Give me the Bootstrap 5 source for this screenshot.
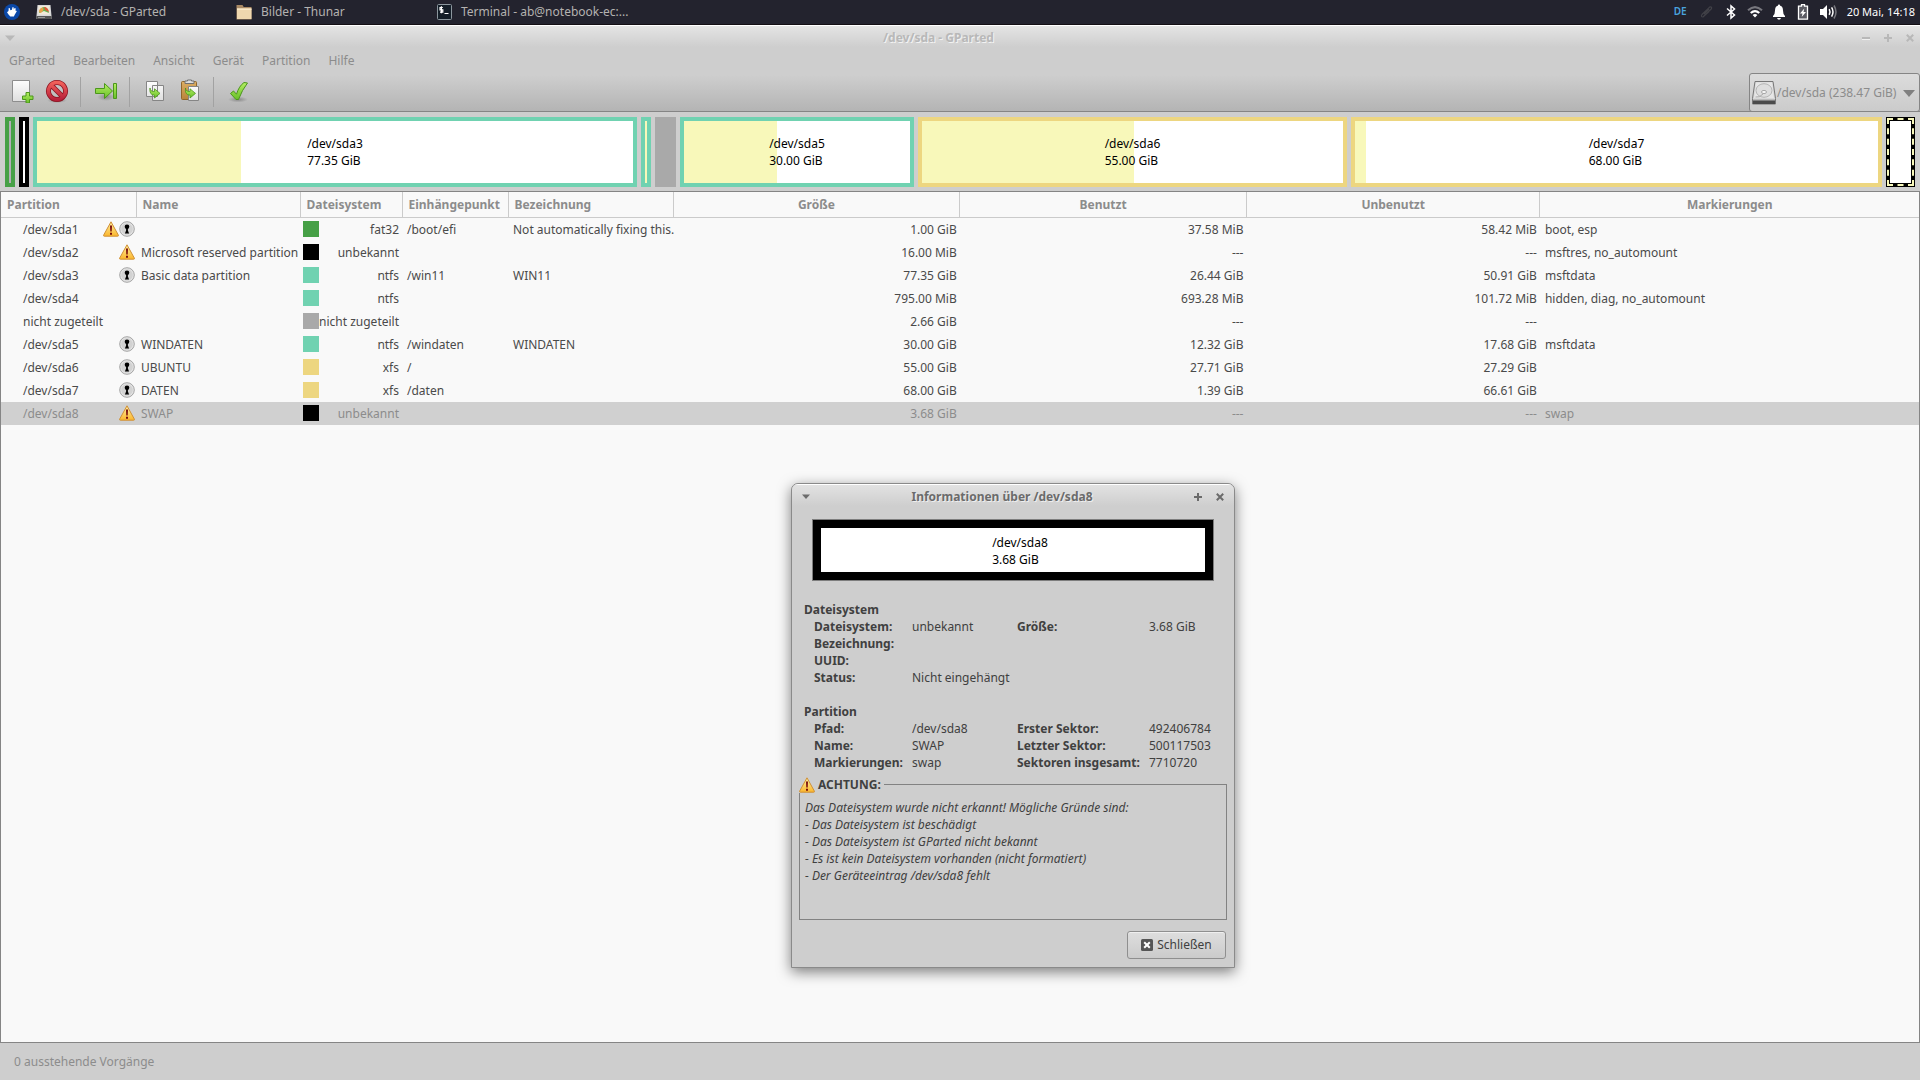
<!DOCTYPE html>
<html lang="de">
<head>
<meta charset="utf-8">
<meta name="viewport" content="width=device-width, initial-scale=1">
<title>/dev/sda - GParted</title>
<link href="https://cdn.jsdelivr.net/npm/bootstrap@5.3.0/dist/css/bootstrap.min.css" rel="stylesheet">
<style>
  body { font: 12px/17px "Noto Sans", sans-serif; color: #4a4a4a; background: #cecece; overflow: hidden; }
  svg { display: block; flex: none; }
  button, select { font: inherit; color: inherit; }

  /* desktop panel */
  .desk-panel { height: 25px; background: #23232e; border-bottom: 1px solid #140f14; color: #b4b2b0; padding: 0 5px 1px 4px; gap: 16px; }
  .task-list { gap: 0; }
  .task-btn { width: 200px; gap: 9px; background: none; border: 0; padding: 0; text-align: left; }
  .tray { color: #fff; gap: 8px; }
  .tray-lang { color: #4aa3df; font-size: 10px; font-weight: 600; margin-right: 4px; }
  .tray-clock { font-size: 11px; margin-left: 2px; }

  /* main window */
  .win-head { background: linear-gradient(#fff 0, #fff 1px, #e4e4e4 1px, #cecece 22px, #cecece 50px, #b4b4b4 86px); border-bottom: 1px solid #858585; color: #8c8c8c; }
  .title-line { height: 23px; font-weight: 700; color: #b8b8b8; text-shadow: 1px 1px 0 #f2f2f2; padding: 2px 6px 0 5px; }
  .title-line button, .dlg-title button { background: none; border: 0; padding: 0; }
  .title-btns { gap: 14px; }
  .menu-line { height: 24px; }
  .menu-line a { color: inherit; text-decoration: none; padding: 0 9px; }
  .tool-line { height: 39px; }
  .tool-line .tool { background: none; border: 0; padding: 0 5px; }
  .tool-group { padding: 0 6px 0 8px; height: 32px; gap: 1px; align-items: start; }
  .tool-group:first-child { padding-left: 5px; }
  .tool-sep { width: 1px; height: 30px; background: #a2a2a2; margin-top: 5px; }
  .dev-combo { width: 171px; height: 39px; margin-bottom: -1px; border: 1px solid #858585; border-radius: 3px; background: linear-gradient(#dcdcdc, #cbcbcb); padding: 0 4px 0 2px; }
  .dev-combo select { appearance: none; border: 0; background: none; padding: 0 0 0 1px; outline: 0; opacity: 1; }

  /* disk map */
  .disk-map { height: 80px; padding: 5px; gap: 4px; border-bottom: 1px solid #858585; }
  .seg { height: 70px; border: 4px solid; background: #fff; color: #000; flex: 1 1 0; position: relative; }
  .seg-tiny { flex: 0 0 10px; }
  .seg .used-part { position: absolute; inset: 0 auto 0 0; background: #f8f8ba; }
  .seg .seg-text { position: relative; }
  .swatch { width: 16px; height: 16px; border: 8px solid; }
  .fs-fat { border-color: #46a046; background: #b3b0b6; }
  .fs-none { border-color: #000; }
  .fs-ntfs { border-color: #70d2b1; }
  .fs-free { border-color: #a9a9a9; background: #a9a9a9; }
  .fs-xfs { border-color: #edd680; }
  .seg.picked::after { content: ""; position: absolute; inset: -3px; border: 2px dashed #f8f8ba; }

  /* partition list */
  .list-pane { background: #f9f9f9; border: 1px solid #858585; border-top: 0; }
  .part-table { table-layout: fixed; width: 100%; --bs-table-bg: transparent; color: inherit; white-space: nowrap; }
  .part-table > thead > tr > th { height: 25px; padding: 0 6px; border: 0 solid #cbcbcb; border-width: 0 1px 1px 0; color: #8c8c8c; vertical-align: middle; background: none; }
  .part-table > thead > tr > th:last-child { border-right: 0; }
  .part-table > tbody > tr > td { height: 23px; padding: 3px 3px 3px 5px; border: 0; color: #4a4a4a; background: none; vertical-align: middle; line-height: 17px; }
  .part-table > tbody > tr > td:first-child { padding: 3px 1px 3px 22px; }
  .part-table > tbody > tr > td:nth-child(3) { padding: 3px; }
  .part-table > tbody > tr.chosen > td { background: #d0d0d0; color: #8c8c8c; }
  .c1 { width: 135px } .c2 { width: 164px } .c3 { width: 102px } .c4 { width: 106px } .c5 { width: 165px }
  .c6 { width: 14.95% } .c8 { width: 15.3% }
  .status-line { height: 37px; padding: 0 14px 1px; color: #8c8c8c; }

  /* info dialog: a window floating over the main one */
  .dlg { position: absolute; left: 791px; top: 483px; width: 444px; background: #cecece; border: 1px solid #8a8a8a; border-radius: 7px 7px 0 0; box-shadow: 0 4px 14px rgba(0,0,0,.5); color: #404040; padding-bottom: 8px; }
  .dlg-title { height: 25px; padding: 0 10px; border-radius: 6px 6px 0 0; background: linear-gradient(#fff 0, #fff 1px, #e2e2e2 1px, #cecece 22px); font-weight: 700; color: #6b6b6b; text-shadow: 1px 1px 0 #eee; }
  .dlg-title .dlg-x { margin-left: 14px; }
  .dlg-bar { margin: 10px 20px 20px; height: 62px; border: 1px solid #7d7d7d; }
  .dlg-bar > div { border: 8px solid #000; background: #fff; color: #000; padding: 2px 0 0 14px; }
  .info-grid { display: grid; grid-template-columns: 98px 105px 132px 1fr; padding-left: 22px; margin: 0; }
  .info-grid dt, .info-grid dd { margin: 0; height: 17px; }
  .info-head { font-size: 12px; line-height: 17px; font-weight: 700; margin: 0; padding-left: 12px; }
  .info-grid + .info-head { margin-top: 17px; }
  .warn-box { margin: 5px 7px 11px; border: 1px solid #828282; min-height: 144px; padding: 6px 5px 5px; font-style: italic; }
  .warn-box legend { float: none; width: auto; font: 700 12px/17px "Noto Sans", sans-serif; background: #cecece; margin: 0 0 0 -6px; padding: 0 3px 0 0; gap: 3px; }
  .close-btn { width: 99px; height: 28px; margin-right: 8px; border: 1px solid #8f8f8f; border-radius: 3px; background: linear-gradient(#dedede, #cbcbcb); box-shadow: inset 0 1px 0 #efefef; color: #404040; gap: 4px; padding: 0 0 1px; }
</style>
<script src="https://cdn.jsdelivr.net/npm/bootstrap@5.3.0/dist/js/bootstrap.bundle.min.js"></script>
</head>
<body class="vh-100 d-flex flex-column">

<svg width="0" height="0" class="position-absolute" aria-hidden="true">
  <defs>
    <linearGradient id="gWarn" x2="0" y2="1"><stop stop-color="#fff0a0"/><stop offset="1" stop-color="#fbb62c"/></linearGradient>
    <linearGradient id="gGreen" x2="0" y2="1"><stop stop-color="#b4ee62"/><stop offset="1" stop-color="#68c028"/></linearGradient>
    <linearGradient id="gRed" x2="0" y2="1"><stop stop-color="#f0605a"/><stop offset="1" stop-color="#b8203a"/></linearGradient>
    <linearGradient id="gPaper" x2="0" y2="1"><stop stop-color="#fdfdfd"/><stop offset="1" stop-color="#dedede"/></linearGradient>
    <linearGradient id="gWood" x2="0" y2="1"><stop stop-color="#dcae64"/><stop offset="1" stop-color="#b98339"/></linearGradient>
    <radialGradient id="gShade"><stop stop-opacity=".28"/><stop offset="1" stop-opacity="0"/></radialGradient>
    <symbol id="warn" viewBox="0 0 16 16"><path d="M8 .8 15.400 14.200q.3 1-.7 1H1.300q-1 0-.7-1z" fill="url(#gWarn)" stroke="#cf8f35" stroke-linejoin="round"/><path d="M7 4.500h2l-.3 6H7.300zM7 11.700h2v2H7z" fill="#7a0c0c"/></symbol>
    <symbol id="key" viewBox="0 0 16 16"><circle cx="8" cy="8" r="7.300" fill="#e4e4e4" stroke="#a5a5a5"/><circle cx="8" cy="8" r="5.800" fill="#d2d2d2"/><circle cx="8" cy="5.700" r="2.300"/><path d="M7.100 7h1.800v2.600l1.200 2.800H5.900l1.200-2.800z"/></symbol>
    <symbol id="tri" viewBox="0 0 10 6"><path d="M0 .5h10L5 6z" fill="currentColor"/></symbol>
    <symbol id="plus" viewBox="0 0 8 8"><path d="M3 0h2v3h3v2H5v3H3V5H0V3h3z" fill="currentColor"/></symbol>
    <symbol id="cross" viewBox="0 0 8 8"><path d="m.8.8 6.400 6.400M7.200.8.8 7.200" stroke="currentColor" stroke-width="2"/></symbol>
  </defs>
</svg>

<header class="desk-panel d-flex align-items-center flex-shrink-0">
  <button class="bg-transparent border-0 p-0" aria-label="Anwendungen">
    <svg width="16" height="16" viewBox="0 0 16 16"><circle cx="8" cy="8" r="8" fill="#0a48a8"/><path d="M3 8.300 4.500 7 4.700 4l1.200.2.4 2L8 5.800l.4-2.600 1.200.1.2 2.200.8-1.600 1.200.5-.4 2.200 1.500.4-1 1.800-1.200 2-.8 1.700H6.300l-1.800-2z" fill="#fff"/></svg>
  </button>
  <div class="task-list d-flex">
    <button class="task-btn d-flex align-items-center">
      <svg width="16" height="16" viewBox="0 0 16 16"><path d="M1.500 1h13l1 11v3H.5v-3z" fill="#d9d9d9"/><path d="M2.500 2h11v8.500h-11z" fill="#f2ead8"/><path d="M3 9q1-6 5-6 4 .3 5 6l-5-2z" fill="#5fb651"/><path d="M8 3q4 0 5 5L9 6z" fill="#e05a3a"/><path d="M3 8q0-4 4-4.500L7.500 6 5 9z" fill="#e9a04a"/><path d="M.5 12h15v3H.5z" fill="#555"/><path d="M2 13h7v1H2z" fill="#999"/></svg>
      <span>/dev/sda - GParted</span></button>
    <button class="task-btn d-flex align-items-center">
      <svg width="16" height="16" viewBox="0 0 16 16"><path d="M.5 1h6l1.200 2H15.500v12.500H.5z" fill="#a98964"/><path d="M1 4.500h14.500v10.500H1z" fill="#efd7ae"/><path d="M1 4.500h14.500v1.200H1z" fill="#fff0d0"/></svg>
      <span>Bilder - Thunar</span></button>
    <button class="task-btn d-flex align-items-center">
      <svg width="16" height="16" viewBox="0 0 16 16"><rect x="1.500" y=".5" width="14" height="15" rx="1" fill="#141e28" stroke="#8c979e"/><path d="M6.800 3.500H4v2.300h2.800v2.300H4M5.400 2.300v7M8.500 9.500h4" fill="none" stroke="#fff" stroke-width="1.200"/></svg>
      <span>Terminal - ab@notebook-ec:...</span></button>
  </div>
  <div class="tray ms-auto d-flex align-items-center">
    <span class="tray-lang">DE</span>
    <svg width="16" height="16" viewBox="0 0 16 16" fill="none" stroke="#414147" stroke-width="1.200"><path d="m4 13 8.500-8.300q.6-2-1.500-1.800L3 10.500q-1.500 2.500 1 2.500l6-5.500M5 10l5-5"/></svg>
    <svg width="16" height="16" viewBox="-1 0 16 16" fill="none" stroke="#fff" stroke-width="1.500"><path d="m3 4.500 7.500 6.500L7 14V2l3.500 3L3 11.500"/></svg>
    <svg width="16" height="16" viewBox="0 0 16 16"><path d="M.3 5.500Q8-1.500 15.700 5.500L14.300 7Q8 1.500 1.700 7z" fill="#77777e"/><path d="M3 8.200q5-4.600 10 0l-1.500 1.500q-3.500-3-7 0zM5.600 11Q8 9 10.400 11L8 13.600z" fill="#fff"/></svg>
    <svg width="16" height="16" viewBox="-1 0 16 16" fill="#fff"><path d="M7 .5q1.200 0 1.200 1.200Q11 2.500 11 6.500q0 4 2 5.500v1H1v-1q2-1.500 2-5.500 0-4 2.800-4.800Q5.800.5 7 .5zM5 14h4q-.5 1.700-2 1.700T5 14z"/></svg>
    <svg width="16" height="16" viewBox="-1 0 16 16"><path d="M5.500.7h3v1.500h3v13h-9v-13h3z" fill="#5b5b63" stroke="#fff" stroke-width="1.300"/><path d="M8.300 4.500 4 9.500h2.500L5.700 13 10 8H7.500z" fill="#fff"/></svg>
    <svg width="18" height="16" viewBox="0 0 18 16" fill="none" stroke-width="1.500"><path d="M1 5h3l4-4v14l-4-4H1z" fill="#fff"/><path d="M10.200 5.200q1.600 2.800 0 5.600M12.600 3.400q2.800 4.600 0 9.200" stroke="#fff"/><path d="M15 1.500q4 6.500 0 13" stroke="#77777e"/></svg>
    <time class="tray-clock">20 Mai, 14:18</time>
  </div>
</header>

<section class="win-head flex-shrink-0">
  <div class="title-line d-flex align-items-center">
    <button aria-label="Fenstermenü"><svg width="10" height="6"><use href="#tri"/></svg></button>
    <span class="flex-grow-1 text-center">/dev/sda - GParted</span>
    <div class="title-btns d-flex">
      <button aria-label="Minimieren"><svg width="8" height="8" viewBox="0 0 8 8"><path d="M0 3h8v2H0z" fill="currentColor"/><path d="M0 5h8v1H0z" fill="#f0f0f0"/></svg></button>
      <button aria-label="Maximieren"><svg width="8" height="8"><use href="#plus"/></svg></button>
      <button aria-label="Fenster schließen"><svg width="8" height="8"><use href="#cross"/></svg></button>
    </div>
  </div>
  <nav class="menu-line d-flex align-items-center">
    <a href="#">GParted</a><a href="#">Bearbeiten</a><a href="#">Ansicht</a><a href="#">Gerät</a><a href="#">Partition</a><a href="#">Hilfe</a>
  </nav>
  <div class="tool-line d-flex align-items-end">
    <div class="tool-group d-flex">
      <button class="tool" aria-label="Neu"><svg width="24" height="24" viewBox="0 0 24 24"><path d="M2.500 1.500h17v21h-17z" fill="url(#gPaper)" stroke="#8d8d8d"/><path d="M16 13.500h3.500v3.500H23v3.500h-3.500V24H16v-3.500h-3.500V17H16z" fill="url(#gGreen)" stroke="#4c961c" stroke-width="1"/></svg></button>
      <button class="tool" aria-label="Löschen"><svg width="24" height="24" viewBox="0 0 24 24"><ellipse cx="12" cy="21.500" rx="10" ry="2.500" fill="url(#gShade)"/><path d="M12 3.500a8.500 8.500 0 1 0 .01 0M6 6l12 12" fill="none" stroke="#8e1522" stroke-width="5"/><path d="M12 3.500a8.500 8.500 0 1 0 .01 0M6 6l12 12" fill="none" stroke="url(#gRed)" stroke-width="3.400"/></svg></button>
    </div>
    <div class="tool-sep align-self-start"></div>
    <div class="tool-group d-flex">
      <button class="tool" aria-label="Größe ändern"><svg width="24" height="24" viewBox="0 0 24 24"><ellipse cx="12" cy="18" rx="9" ry="4" fill="url(#gShade)"/><path d="M1.500 9.500h9V4.500l8 7.500-8 7.500v-5h-9zM19.500 4.500h3v15h-3z" fill="url(#gGreen)" stroke="#4c961c"/></svg></button>
    </div>
    <div class="tool-sep align-self-start"></div>
    <div class="tool-group d-flex">
      <button class="tool" aria-label="Kopieren"><svg width="24" height="24" viewBox="0 0 24 24"><path d="M3.500 2.500h11v15h-11zM9.500 6.500h11v15h-11z" fill="url(#gPaper)" stroke="#858585"/><path d="M7 9q0 3.500 4.500 3.500V9.800l5.500 4.600-5.500 4.600v-2.800Q6 16 7 9z" fill="url(#gGreen)" stroke="#4c961c" stroke-width=".8"/></svg></button>
      <button class="tool" aria-label="Einfügen"><svg width="24" height="24" viewBox="0 0 24 24"><rect x="3.500" y="2.500" width="15" height="18" rx="1" fill="url(#gWood)" stroke="#8f662c"/><path d="M7 4.500V2h2.500V1h4v1H16v2.500z" fill="#ddd" stroke="#707070"/><path d="M10.500 7.500h10v14h-10z" fill="url(#gPaper)" stroke="#858585"/><path d="M7.500 9q0 3.500 4.500 3.500V9.800l5.500 4.600-5.500 4.600v-2.800Q6.500 16 7.500 9z" fill="url(#gGreen)" stroke="#4c961c" stroke-width=".8"/></svg></button>
    </div>
    <div class="tool-sep align-self-start"></div>
    <div class="tool-group d-flex">
      <button class="tool" aria-label="Anwenden"><svg width="24" height="24" viewBox="0 0 24 24"><ellipse cx="11" cy="20.500" rx="10" ry="3" fill="url(#gShade)"/><path d="m3.500 14.500 3-2.500 3 3.200Q12 7 17 3.500L20.500 4Q15 11 11.500 20.500H9z" fill="url(#gGreen)" stroke="#4c961c" stroke-linejoin="round"/></svg></button>
    </div>
    <div class="dev-combo ms-auto d-flex align-items-center">
      <svg width="24" height="24" viewBox="0 0 24 24"><path d="M3 .5h18l2.500 17v5.500H.5v-5.500z" fill="#d8d8d8" stroke="#777"/><path d="M1 18.500h22V23H1z" fill="#4b4b4b"/><path d="M1 18h22v1.500H1z" fill="#bbb"/><path d="M4 1.500h16l1.800 15.500H2.200z" fill="#e6e6e6"/><ellipse cx="12" cy="9.500" rx="8" ry="6.800" fill="#dedede" stroke="#b4b4b4"/><ellipse cx="12" cy="11" rx="2.500" ry="1.600" fill="#f6f6f6" stroke="#a8a8a8"/><path d="M3.500 16q4 1 7.500-3" fill="none" stroke="#aaa"/></svg>
      <select class="flex-grow-1" aria-label="Laufwerk"><option>/dev/sda (238.47 GiB)</option></select>
      <svg width="12" height="8" viewBox="0 0 12 8"><path d="M0 1h12L6 8z" fill="#808080"/></svg>
    </div>
  </div>
</section>

<section class="disk-map d-flex flex-shrink-0">
  <div class="seg seg-tiny fs-fat"></div>
  <div class="seg seg-tiny fs-none"></div>
  <div class="seg fs-ntfs d-flex align-items-center justify-content-center" style="flex-grow:596"><div class="used-part" style="width:34.2%"></div><div class="seg-text">/dev/sda3<br>77.35 GiB</div></div>
  <div class="seg seg-tiny fs-ntfs"><div class="used-part w-100"></div></div>
  <div class="seg fs-free" style="flex-grow:13"></div>
  <div class="seg fs-ntfs d-flex align-items-center justify-content-center" style="flex-grow:226"><div class="used-part" style="width:41.1%"></div><div class="seg-text">/dev/sda5<br>30.00 GiB</div></div>
  <div class="seg fs-xfs d-flex align-items-center justify-content-center" style="flex-grow:421"><div class="used-part" style="width:50.4%"></div><div class="seg-text">/dev/sda6<br>55.00 GiB</div></div>
  <div class="seg fs-xfs d-flex align-items-center justify-content-center" style="flex-grow:523"><div class="used-part" style="width:2.1%"></div><div class="seg-text">/dev/sda7<br>68.00 GiB</div></div>
  <div class="seg fs-none picked" style="flex-grow:21"></div>
</section>

<main class="list-pane flex-grow-1">
  <table class="table part-table mb-0">
    <colgroup><col class="c1"><col class="c2"><col class="c3"><col class="c4"><col class="c5"><col class="c6"><col class="c6"><col class="c8"><col></colgroup>
    <thead><tr><th>Partition</th><th>Name</th><th>Dateisystem</th><th>Einhängepunkt</th><th>Bezeichnung</th><th class="text-center">Größe</th><th class="text-center">Benutzt</th><th class="text-center">Unbenutzt</th><th class="text-center">Markierungen</th></tr></thead>
    <tbody>
      <tr><td><div class="d-flex"><span class="me-auto">/dev/sda1</span><svg width="16" height="16"><use href="#warn"/></svg><svg width="16" height="16"><use href="#key"/></svg></div></td><td></td><td><div class="d-flex justify-content-between"><i class="swatch fs-fat"></i>fat32</div></td><td>/boot/efi</td><td>Not automatically fixing this.</td><td class="text-end">1.00 GiB</td><td class="text-end">37.58 MiB</td><td class="text-end">58.42 MiB</td><td>boot, esp</td></tr>
      <tr><td><div class="d-flex"><span class="me-auto">/dev/sda2</span><svg width="16" height="16"><use href="#warn"/></svg></div></td><td>Microsoft reserved partition</td><td><div class="d-flex justify-content-between"><i class="swatch fs-none"></i>unbekannt</div></td><td></td><td></td><td class="text-end">16.00 MiB</td><td class="text-end">---</td><td class="text-end">---</td><td>msftres, no_automount</td></tr>
      <tr><td><div class="d-flex"><span class="me-auto">/dev/sda3</span><svg width="16" height="16"><use href="#key"/></svg></div></td><td>Basic data partition</td><td><div class="d-flex justify-content-between"><i class="swatch fs-ntfs"></i>ntfs</div></td><td>/win11</td><td>WIN11</td><td class="text-end">77.35 GiB</td><td class="text-end">26.44 GiB</td><td class="text-end">50.91 GiB</td><td>msftdata</td></tr>
      <tr><td>/dev/sda4</td><td></td><td><div class="d-flex justify-content-between"><i class="swatch fs-ntfs"></i>ntfs</div></td><td></td><td></td><td class="text-end">795.00 MiB</td><td class="text-end">693.28 MiB</td><td class="text-end">101.72 MiB</td><td>hidden, diag, no_automount</td></tr>
      <tr><td>nicht zugeteilt</td><td></td><td><div class="d-flex justify-content-between"><i class="swatch fs-free"></i>nicht zugeteilt</div></td><td></td><td></td><td class="text-end">2.66 GiB</td><td class="text-end">---</td><td class="text-end">---</td><td></td></tr>
      <tr><td><div class="d-flex"><span class="me-auto">/dev/sda5</span><svg width="16" height="16"><use href="#key"/></svg></div></td><td>WINDATEN</td><td><div class="d-flex justify-content-between"><i class="swatch fs-ntfs"></i>ntfs</div></td><td>/windaten</td><td>WINDATEN</td><td class="text-end">30.00 GiB</td><td class="text-end">12.32 GiB</td><td class="text-end">17.68 GiB</td><td>msftdata</td></tr>
      <tr><td><div class="d-flex"><span class="me-auto">/dev/sda6</span><svg width="16" height="16"><use href="#key"/></svg></div></td><td>UBUNTU</td><td><div class="d-flex justify-content-between"><i class="swatch fs-xfs"></i>xfs</div></td><td>/</td><td></td><td class="text-end">55.00 GiB</td><td class="text-end">27.71 GiB</td><td class="text-end">27.29 GiB</td><td></td></tr>
      <tr><td><div class="d-flex"><span class="me-auto">/dev/sda7</span><svg width="16" height="16"><use href="#key"/></svg></div></td><td>DATEN</td><td><div class="d-flex justify-content-between"><i class="swatch fs-xfs"></i>xfs</div></td><td>/daten</td><td></td><td class="text-end">68.00 GiB</td><td class="text-end">1.39 GiB</td><td class="text-end">66.61 GiB</td><td></td></tr>
      <tr class="chosen"><td><div class="d-flex"><span class="me-auto">/dev/sda8</span><svg width="16" height="16"><use href="#warn"/></svg></div></td><td>SWAP</td><td><div class="d-flex justify-content-between"><i class="swatch fs-none"></i>unbekannt</div></td><td></td><td></td><td class="text-end">3.68 GiB</td><td class="text-end">---</td><td class="text-end">---</td><td>swap</td></tr>
    </tbody>
  </table>
</main>

<footer class="status-line d-flex align-items-center flex-shrink-0">0 ausstehende Vorgänge</footer>

<section class="dlg" role="dialog" aria-labelledby="dlgTitle">
  <div class="dlg-title d-flex align-items-center">
    <button aria-label="Fenstermenü"><svg width="8" height="5" viewBox="0 0 10 6"><use href="#tri"/></svg></button>
    <span id="dlgTitle" class="flex-grow-1 text-center">Informationen über /dev/sda8</span>
    <button aria-label="Maximieren"><svg width="8" height="8"><use href="#plus"/></svg></button>
    <button class="dlg-x" aria-label="Fenster schließen"><svg width="8" height="8"><use href="#cross"/></svg></button>
  </div>
  <div class="dlg-bar d-flex"><div class="flex-grow-1 d-flex align-items-center justify-content-center"><div>/dev/sda8<br>3.68 GiB</div></div></div>
  <h2 class="info-head">Dateisystem</h2>
  <dl class="info-grid">
    <dt>Dateisystem:</dt><dd>unbekannt</dd><dt>Größe:</dt><dd>3.68 GiB</dd>
    <dt>Bezeichnung:</dt><dd></dd><dd></dd><dd></dd>
    <dt>UUID:</dt><dd></dd><dd></dd><dd></dd>
    <dt>Status:</dt><dd class="text-nowrap">Nicht eingehängt</dd><dd></dd><dd></dd>
  </dl>
  <h2 class="info-head">Partition</h2>
  <dl class="info-grid">
    <dt>Pfad:</dt><dd>/dev/sda8</dd><dt>Erster Sektor:</dt><dd>492406784</dd>
    <dt>Name:</dt><dd>SWAP</dd><dt>Letzter Sektor:</dt><dd>500117503</dd>
    <dt>Markierungen:</dt><dd>swap</dd><dt>Sektoren insgesamt:</dt><dd>7710720</dd>
  </dl>
  <fieldset class="warn-box">
    <legend class="d-flex align-items-center"><svg width="16" height="16"><use href="#warn"/></svg>ACHTUNG:</legend>
    Das Dateisystem wurde nicht erkannt! Mögliche Gründe sind:<br>
    - Das Dateisystem ist beschädigt<br>
    - Das Dateisystem ist GParted nicht bekannt<br>
    - Es ist kein Dateisystem vorhanden (nicht formatiert)<br>
    - Der Geräteeintrag /dev/sda8 fehlt
  </fieldset>
  <div class="d-flex justify-content-end">
    <button class="close-btn d-flex align-items-center justify-content-center"><svg width="12" height="12" viewBox="0 0 12 12"><rect width="12" height="12" rx="1.500" fill="#555"/><path d="m3.200 3.200 5.600 5.600M8.800 3.200 3.200 8.800" stroke="#fff" stroke-width="2"/></svg>Schließen</button>
  </div>
</section>
</body>
</html>
